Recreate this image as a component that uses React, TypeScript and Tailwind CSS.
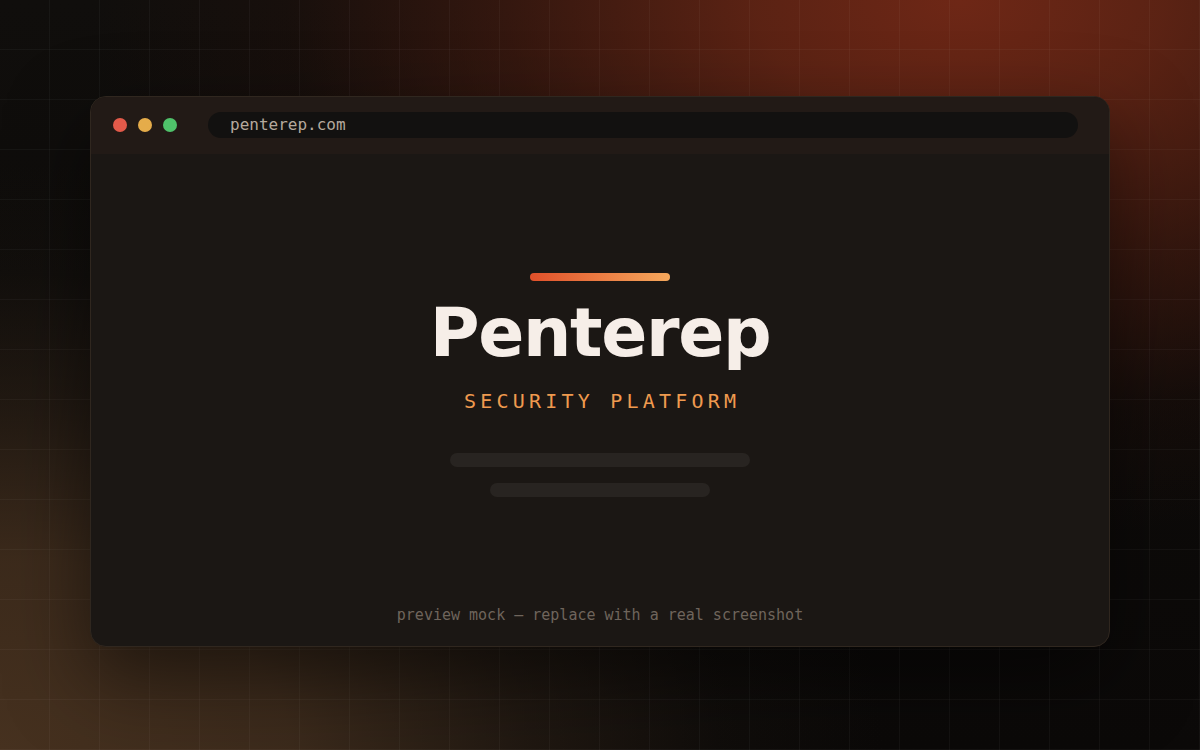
import React from "react";

export default function App() {
  return (
    <div className="relative w-full h-[750px] overflow-hidden bg-[#0b0908] font-['DejaVu_Sans',sans-serif]">
      <div className="w-full h-full bg-[radial-gradient(ellipse_85%_85%_at_80%_0%,#6e2716_0%,rgba(104,38,21,0.85)_20%,rgba(80,30,17,0.55)_45%,rgba(50,20,12,0.22)_66%,transparent_85%),radial-gradient(ellipse_80%_85%_at_0%_100%,#46311f_0%,rgba(68,48,31,0.85)_30%,rgba(52,38,26,0.5)_55%,rgba(30,24,18,0.25)_75%,transparent_92%),linear-gradient(to_bottom,#100e0c,#0b0908)]">
        <div className="w-full h-full flex items-center justify-center bg-[linear-gradient(to_right,rgba(255,255,255,0.035)_1px,transparent_1px),linear-gradient(to_bottom,rgba(255,255,255,0.035)_1px,transparent_1px)] bg-[size:50px_50px] bg-[position:-1px_-1px]">
          <div className="w-[1020px] h-[551px] -mt-[8px] rounded-[16px] border border-[#30271f] bg-[#1b1714] overflow-hidden flex flex-col shadow-[0_30px_80px_rgba(0,0,0,0.5)]">
            <div className="h-[57px] shrink-0 bg-[#221a16] flex items-center pl-[22px] pr-[31px]">
              <div className="flex items-center gap-[11px]">
                <span className="w-[14px] h-[14px] rounded-full bg-[#e25a4a]" />
                <span className="w-[14px] h-[14px] rounded-full bg-[#e5ac4a]" />
                <span className="w-[14px] h-[14px] rounded-full bg-[#4fc26a]" />
              </div>
              <div className="ml-[31px] flex-1 h-[26px] rounded-full bg-[#121110] flex items-center pl-[22px] font-['DejaVu_Sans_Mono',monospace] text-[16px] text-[#b5a99d]">
                penterep.com
              </div>
            </div>
            <div className="flex-1 flex flex-col items-center">
              <div className="mt-[119px] w-[140px] h-[8px] rounded-full bg-[linear-gradient(to_right,#e1502a,#f5a85c)]" />
              <h1 className="mt-[19px] text-[68px] leading-[66px] font-bold tracking-[-0.02em] text-[#f6eee8]">
                Penterep
              </h1>
              <div className="mt-[21px] font-['DejaVu_Sans_Mono',monospace] text-[20px] leading-[28px] tracking-[0.21em] pl-[0.21em] text-[#ef9a4f]">
                SECURITY PLATFORM
              </div>
              <div className="mt-[38px] w-[300px] h-[14px] rounded-full bg-[#282421]" />
              <div className="mt-[16px] w-[220px] h-[14px] rounded-full bg-[#282421]" />
              <div className="mt-auto mb-[20px] font-['DejaVu_Sans_Mono',monospace] text-[15px] leading-[22px] text-[#6f655c]">
                preview mock — replace with a real screenshot
              </div>
            </div>
          </div>
        </div>
      </div>
    </div>
  );
}
